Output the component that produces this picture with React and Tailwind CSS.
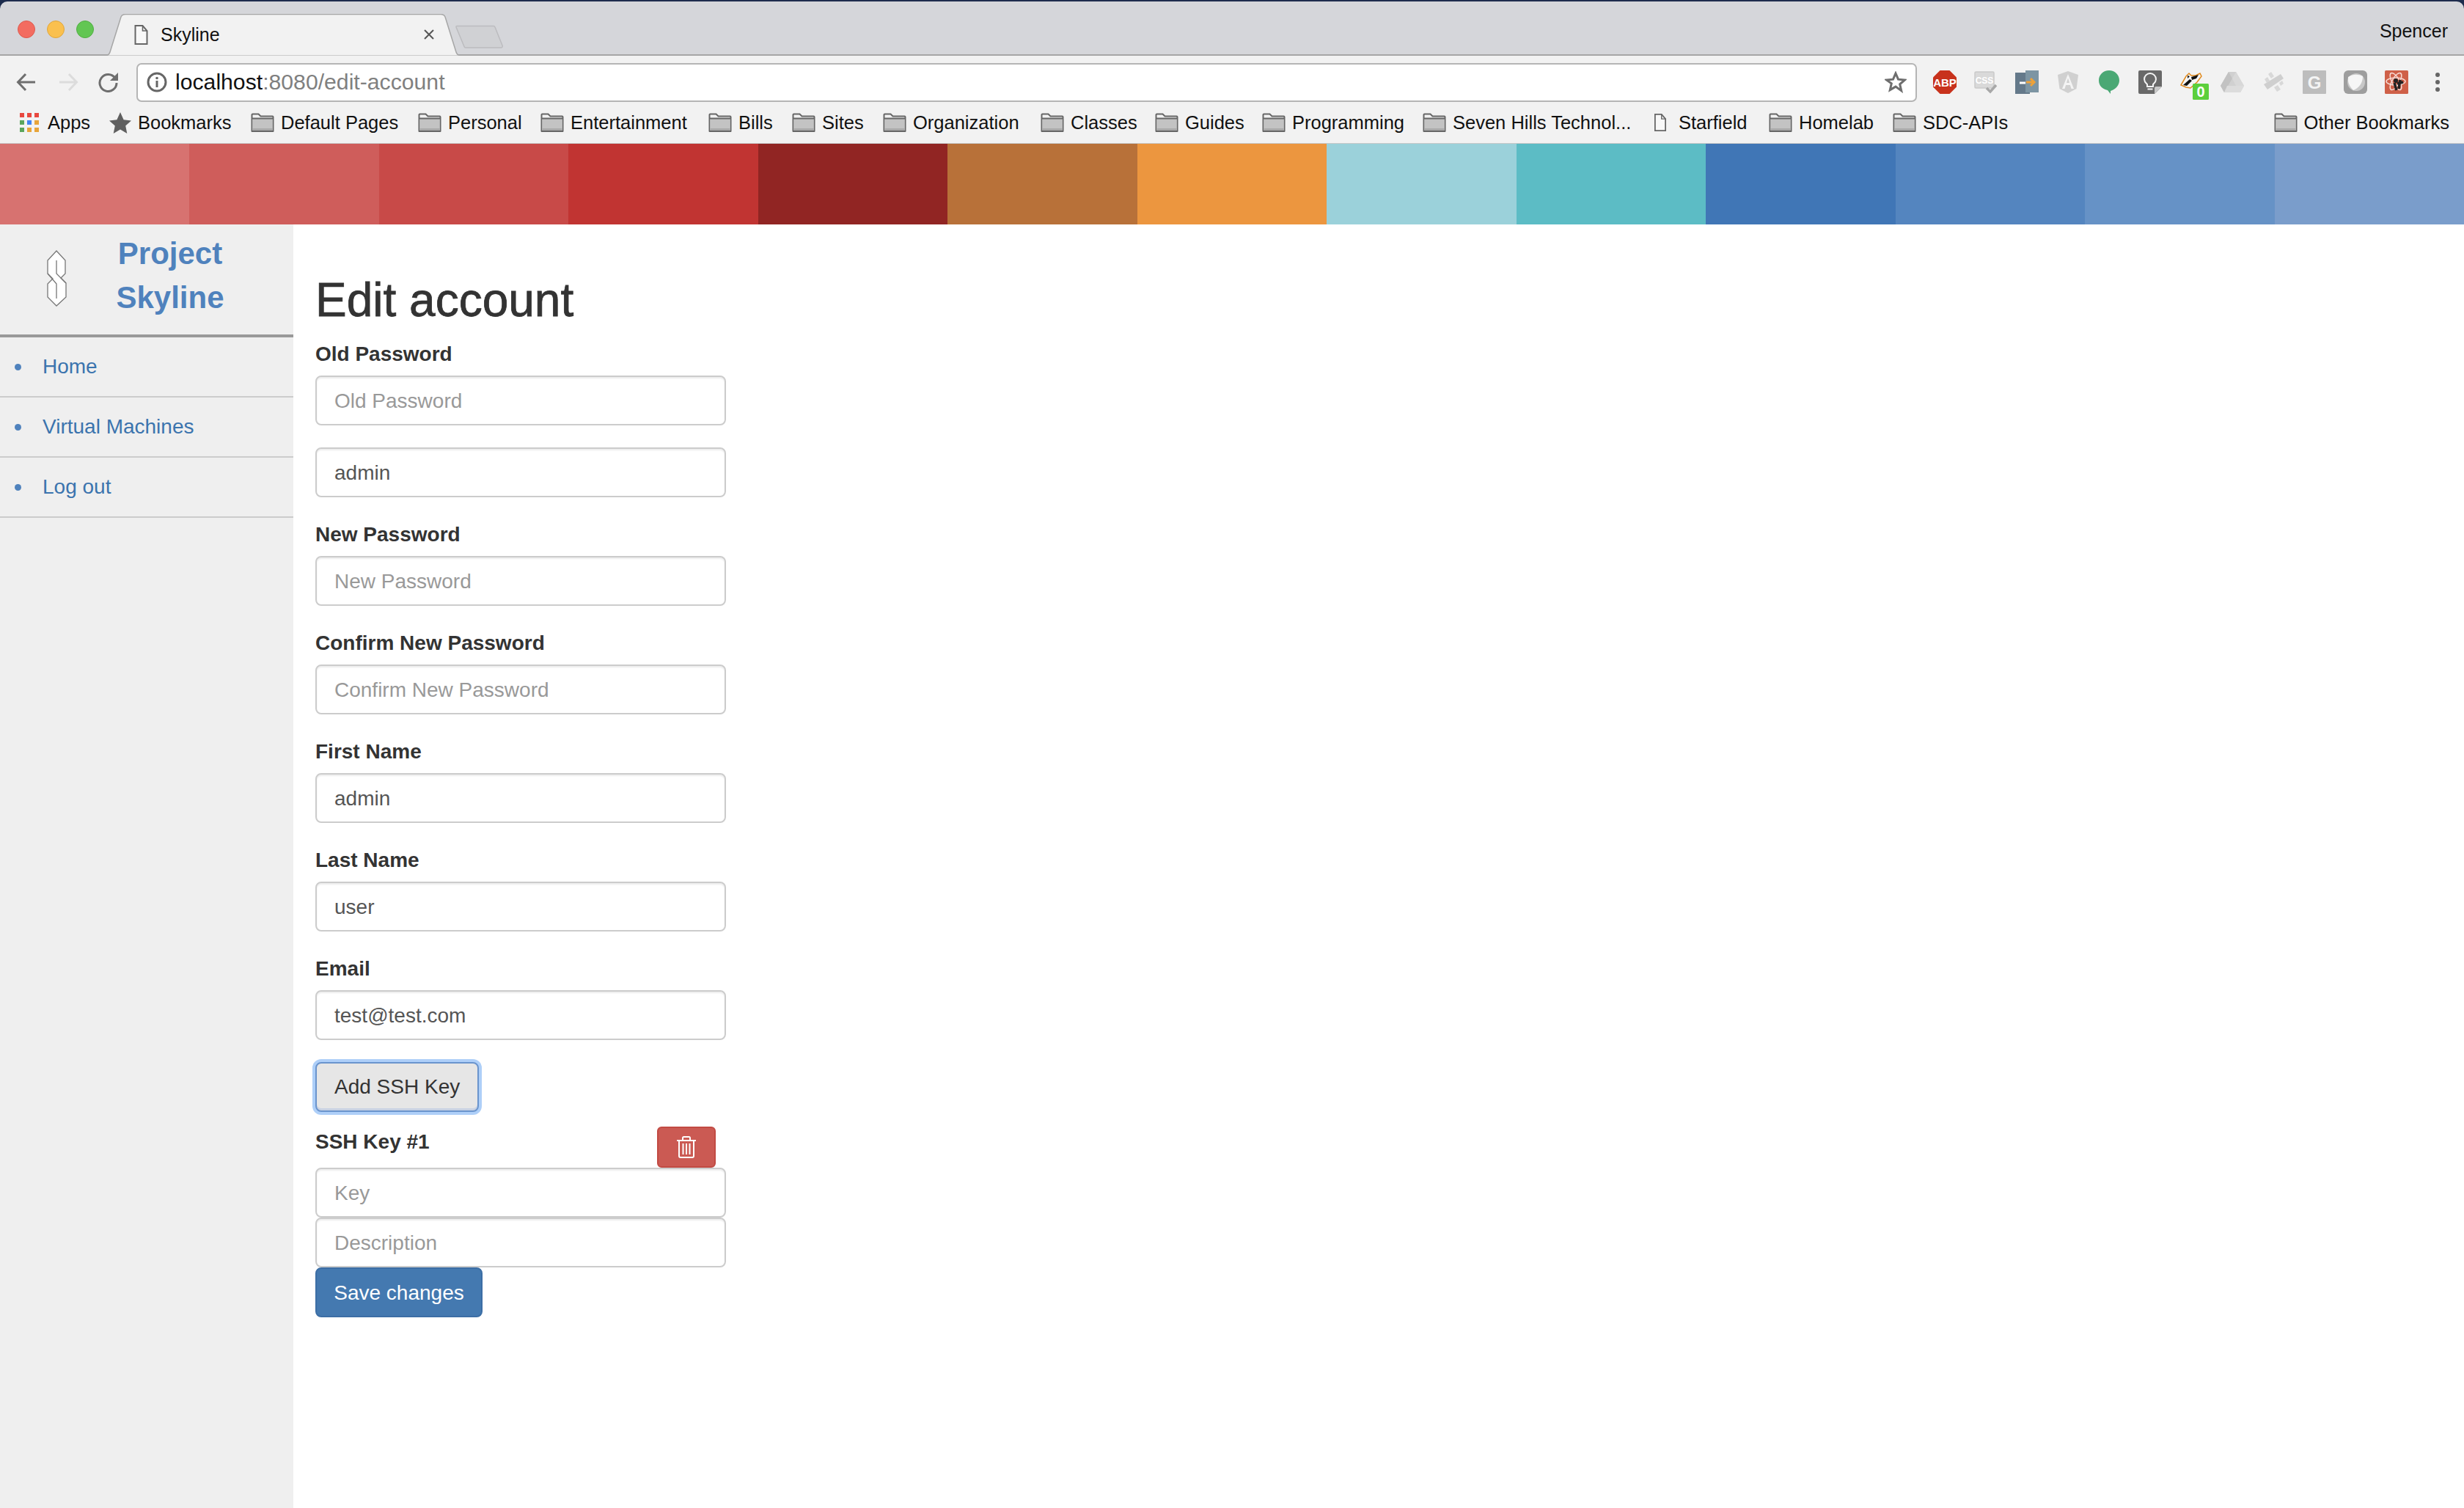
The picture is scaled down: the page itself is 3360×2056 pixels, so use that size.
import React from "react";

const strip = [
  "bg-[#d77270]", "bg-[#cf5d5b]", "bg-[#c84a48]", "bg-[#c13432]", "bg-[#912523]", "bg-[#b87139]", "bg-[#ec963f]",
  "bg-[#9bd1da]", "bg-[#5cbcc5]", "bg-[#4076b6]", "bg-[#5485bf]", "bg-[#6692c6]", "bg-[#7a9dcb]",
];

const Folder = () => (
  <svg width="32" height="26" viewBox="0 0 32 26" className="shrink-0">
    <path d="M1.500 24.500V2.500a1 1 0 0 1 1-1h8l3 3h16a1 1 0 0 1 1 1v19z" fill="#f2f2f2" stroke="#666" strokeWidth="2" />
    <rect x="2.500" y="8" width="27" height="16" fill="#c3c3c3" />
    <rect x="1.500" y="6.500" width="29" height="2" fill="#666" />
    <rect x="2.500" y="21" width="27" height="3" fill="#aaa" />
    <path d="M1 25h30" stroke="#666" strokeWidth="2" />
  </svg>
);

const PageIcon = ({ w = 18, h = 27 }) => (
  <svg width={w} height={h} viewBox="0 0 18 27" className="shrink-0">
    <path d="M1 1h10l6 7v18H1z" fill="#f8f8f8" stroke="#666" strokeWidth="2" />
    <path d="M11 1v7h6" fill="none" stroke="#666" strokeWidth="1.600" />
  </svg>
);

const Bm = ({ label, w }) => (
  <div className={"flex items-center gap-[9px] shrink-0 " + w}>
    <Folder />
    <span>{label}</span>
  </div>
);

const Ext = ({ children }) => (
  <svg width="32" height="32" viewBox="0 0 32 32" className="shrink-0 overflow-visible">
    {children}
  </svg>
);

const Field = ({ label, placeholder, value }) => (
  <div className="mb-[30px]">
    {label && <label className="block font-bold text-[28px] leading-[42px] mb-[8px] text-[#333]">{label}</label>}
    <TextInput placeholder={placeholder} value={value} />
  </div>
);

const TextInput = ({ placeholder, value }) => (
  <input
    type="text"
    placeholder={placeholder}
    defaultValue={value}
    className="block w-[560px] h-[68px] px-[24px] pt-[2px] text-[28px] text-[#555] bg-white border-2 border-[#ccc] rounded-[8px] shadow-[inset_0_2px_2px_rgba(0,0,0,0.075)] placeholder:text-[#999] outline-none"
  />
);

const NavItem = ({ label }) => (
  <div className="flex items-center h-[82px] border-b-2 border-[#ccc] text-[#3b74ae] text-[28px] pl-[20px]">
    <span className="w-[9px] h-[9px] rounded-full bg-[#4f82bd] mr-[30px]" />
    <span className="-ml-[1px]">{label}</span>
  </div>
);

export default function App() {
  return (
    <div className="w-[3360px] h-[2056px] flex flex-col bg-white overflow-hidden font-['Liberation_Sans',sans-serif]">
      {/* tab strip */}
      <div className="h-[76px] bg-[#1d2c4d] pt-[2px] shrink-0">
        <div className="h-[74px] rounded-t-[10px] bg-[#d5d6da] border-b-2 border-[#a6a6a6] flex items-end pl-[24px]">
          <div className="flex gap-[16px] self-start mt-[26px]">
            <span className="w-[24px] h-[24px] rounded-full bg-[#f36c60] border border-[#dd5a4e]" />
            <span className="w-[24px] h-[24px] rounded-full bg-[#fac04e] border border-[#dfa63c]" />
            <span className="w-[24px] h-[24px] rounded-full bg-[#62c653] border border-[#50ae42]" />
          </div>
          <div className="relative w-[484px] h-[57px] -mb-[2px] ml-[16px] flex items-center pl-[39px] shrink-0">
            <svg width="484" height="57" viewBox="0 0 484 57" className="absolute left-0 top-0">
              <path d="M0 56.500C3 56.500 5 55 6 52L21 4C22 1.500 24 .5 27 .5H457C460 .5 462 1.500 463 4L478 52C479 55 481 56.500 484 56.500" fill="#f2f2f2" stroke="#a6a6a6" strokeWidth="1.500" />
            </svg>
            <div className="relative flex items-center w-full text-[25px] text-[#111]">
              <PageIcon w={19} h={27} />
              <span className="ml-[17px]">Skyline</span>
              <svg width="16" height="16" viewBox="0 0 16 16" className="absolute left-[394px] top-[10px]">
                <path d="M2 2l12 12M14 2L2 14" stroke="#555" strokeWidth="2" />
              </svg>
            </div>
          </div>
          <svg width="66" height="32" viewBox="0 0 66 32" className="self-start mt-[32px] -ml-[7px] shrink-0">
            <path d="M2 1.500H52a2 2 0 0 1 2 1.500L64 28a2 2 0 0 1-2 3H14a2 2 0 0 1-2-1.500L1 3a1.200 1.200 0 0 1 1-1.500z" fill="#d0d1d4" stroke="#bcbcbf" strokeWidth="1.500" />
          </svg>
          <span className="ml-auto self-start mt-[25px] pr-[22px] text-[25px] leading-[30px] text-[#111]">Spencer</span>
        </div>
      </div>

      {/* toolbar */}
      <div className="h-[69px] bg-[#f2f2f2] flex items-center pt-[3px] pl-[22px] pr-[20px] shrink-0">
        <svg width="28" height="26" viewBox="0 0 28 26" className="shrink-0">
          <path d="M26 13H3M13 2L2.500 13 13 24" fill="none" stroke="#6e6e6e" strokeWidth="3" />
        </svg>
        <svg width="28" height="26" viewBox="0 0 28 26" className="shrink-0 ml-[29px]">
          <path d="M2 13h23M15 2l10.500 11L15 24" fill="none" stroke="#dcdcdc" strokeWidth="3" />
        </svg>
        <svg width="28" height="28" viewBox="0 0 28 28" className="shrink-0 ml-[27px]">
          <path d="M23 8.500A11.500 11.500 0 1 0 25 15" fill="none" stroke="#6e6e6e" strokeWidth="3" />
          <path d="M27 1v11H16z" fill="#6e6e6e" />
        </svg>
        <div className="ml-[24px] flex-1 h-[53px] bg-white border-2 border-[#b5b5b5] rounded-[7px] flex items-center pl-[12px] pr-[12px] mr-[22px]">
          <svg width="28" height="28" viewBox="0 0 28 28" className="shrink-0">
            <circle cx="14" cy="14" r="12" fill="none" stroke="#666" strokeWidth="3" />
            <circle cx="14" cy="8.500" r="1.800" fill="#666" />
            <path d="M14 12v9" stroke="#666" strokeWidth="3" />
          </svg>
          <span className="ml-[11px] text-[30.200px] text-[#111]">
            localhost<span className="text-[#808080]">:8080/edit-account</span>
          </span>
          <svg width="30" height="30" viewBox="0 0 30 30" className="shrink-0 ml-auto">
            <path d="M15 3l3.500 8.200 8.900.8-6.700 5.900 2 8.700L15 21.100 7.300 25.600l2-8.700L2.600 12l8.900-.8z" fill="none" stroke="#6e6e6e" strokeWidth="3" />
          </svg>
        </div>
        <div className="flex gap-[24px]">
          <Ext>
            <path d="M9.500 0h13L32 9.500v13L22.500 32h-13L0 22.500v-13z" fill="#c8321c" />
            <text x="16" y="21.500" textAnchor="middle" fontSize="15" fontWeight="700" fill="#fff" fontFamily="Liberation Sans, sans-serif">ABP</text>
          </Ext>
          <Ext>
            <rect x="1" y="2" width="26" height="22" rx="1.500" fill="#d9d9d9" stroke="#cacaca" strokeWidth="1.500" />
            <text x="14" y="18" textAnchor="middle" fontSize="12" fontWeight="700" fill="#fff" fontFamily="Liberation Sans, sans-serif">CSS</text>
            <path d="M17 24l5 5 8-9" fill="none" stroke="#a8a8a8" strokeWidth="3.500" />
          </Ext>
          <Ext>
            <rect x="0" y="3" width="20" height="29" fill="#64798a" />
            <rect x="14" y="0" width="18" height="30" fill="#7d95a3" />
            <path d="M6 17h8" stroke="#fff" strokeWidth="3" />
            <path d="M15 16h10M21 11l5 5-5 5" fill="none" stroke="#eda23a" strokeWidth="3" />
          </Ext>
          <Ext>
            <path d="M16 1L30 6l-2.500 19L16 31 4.500 25 2 6z" fill="#d0d0d0" />
            <path d="M16 5l-8 20h3.500l1.600-5h5.800l1.600 5H24zM14 17l2-6.500 2 6.500z" fill="#f4f4f4" />
          </Ext>
          <Ext>
            <path d="M16 0c8 0 14 6 14 13.500 0 7-5 12-12 14.500V32l-4-5C7 25.500 2 21 2 13.500 2 6 8 0 16 0z" fill="#4aa874" />
          </Ext>
          <Ext>
            <path d="M2 0h28a2 2 0 0 1 2 2v20l-10 10H2a2 2 0 0 1-2-2V2a2 2 0 0 1 2-2z" fill="#696969" />
            <path d="M22 32l10-10H24a2 2 0 0 0-2 2z" fill="#c8c8c8" />
            <path d="M12 22v-3c-2-2-4-3.500-4-7a8 8 0 0 1 16 0c0 3.500-2 5-4 7v3z" fill="none" stroke="#f4f4f4" strokeWidth="2" />
            <path d="M12.500 25.500h7" stroke="#f4f4f4" strokeWidth="2" />
          </Ext>
          <Ext>
            <path d="M2 20L9 8l4-4 3 3h6l6-3 2 4-6 8-9 8-6-1z" fill="#f5f5f5" stroke="#e08a1e" strokeWidth="1.500" />
            <path d="M5 20l9-8 3 2-7 7zM16 9l10-3-3 5-6 2zM11 7l3 1-3 3z" fill="#111" />
            <rect x="18" y="18" width="22" height="22" rx="1.500" fill="#5bcf3c" />
            <text x="29" y="36" textAnchor="middle" fontSize="20" fontWeight="700" fill="#fff" fontFamily="Liberation Sans, sans-serif">0</text>
          </Ext>
          <Ext>
            <path d="M11 2h10l11 19-5 9H5L0 21z" fill="#d0d0d0" />
            <path d="M11 2l5 9L5 30 0 21z" fill="#c2c2c2" />
            <path d="M21 2l11 19H21l-5-10z" fill="#d8d8d8" />
            <path d="M9 21h23l-5 9H5z" fill="#dcdcdc" />
          </Ext>
          <Ext>
            <path d="M3 19L26 5l4 6L8 26z" fill="#cfcfcf" />
            <path d="M9 5l4-3 4 6-4 3zM4 12l4-3 3 5-4 3zM17 23l5-3 4 6-5 3zM24 17l4-3 2 4-4 3z" fill="#d8d8d8" />
          </Ext>
          <Ext>
            <rect width="32" height="32" rx="1" fill="#bdbdbd" />
            <text x="16" y="25" textAnchor="middle" fontSize="24" fontWeight="700" fill="#f4f4f4" fontFamily="Liberation Sans, sans-serif">G</text>
          </Ext>
          <Ext>
            <rect width="32" height="32" rx="6" fill="#9e9e9e" />
            <circle cx="17" cy="16" r="12" fill="#c8c8c8" />
            <path d="M6 9c6-4 14-4 20-1 0 9-5 16-13 19C8 22 5 16 6 9z" fill="#f6f6f6" />
          </Ext>
          <Ext>
            <rect width="32" height="32" rx="1.500" fill="#cf6048" />
            <ellipse cx="15" cy="15" rx="13" ry="5" fill="none" stroke="#f7d9d2" strokeWidth="1.500" />
            <ellipse cx="15" cy="15" rx="13" ry="5" fill="none" stroke="#f7d9d2" strokeWidth="1.500" transform="rotate(60 15 15)" />
            <ellipse cx="15" cy="15" rx="13" ry="5" fill="none" stroke="#f7d9d2" strokeWidth="1.500" transform="rotate(120 15 15)" />
            <circle cx="15" cy="14" r="3" fill="#222" />
            <path d="M13 17l3 10M21 13l-2 12M17 18l8-2" stroke="#222" strokeWidth="3.500" />
          </Ext>
          <Ext>
            <circle cx="16" cy="6" r="3" fill="#666" />
            <circle cx="16" cy="16" r="3" fill="#666" />
            <circle cx="16" cy="26" r="3" fill="#666" />
          </Ext>
        </div>
      </div>

      {/* bookmarks */}
      <div className="h-[51px] bg-[#f2f2f2] border-b border-[#c9c9c9] flex items-center pb-[6px] pl-[27px] pr-[20px] text-[25.500px] text-[#111] whitespace-nowrap shrink-0">
        <svg width="26" height="26" viewBox="0 0 26 26" className="shrink-0">
          <rect x="0" y="0" width="6" height="6" fill="#e8483f" />
          <rect x="10" y="0" width="6" height="6" fill="#e8483f" />
          <rect x="20" y="0" width="6" height="6" fill="#e8483f" />
          <rect x="0" y="10" width="6" height="6" fill="#5ba55c" />
          <rect x="10" y="10" width="6" height="6" fill="#4285f4" />
          <rect x="20" y="10" width="6" height="6" fill="#e8a53a" />
          <rect x="0" y="20" width="6" height="6" fill="#5ba55c" />
          <rect x="10" y="20" width="6" height="6" fill="#e8a53a" />
          <rect x="20" y="20" width="6" height="6" fill="#e8a53a" />
        </svg>
        <span className="ml-[12px] w-[84px] shrink-0">Apps</span>
        <svg width="30" height="29" viewBox="0 0 30 29" className="shrink-0">
          <path d="M15 0l4.600 10.300L30 11.400l-7.800 7.200L24.300 29 15 23.600 5.700 29l2.100-10.400L0 11.400l10.400-1.100z" fill="#5f5f5f" />
        </svg>
        <span className="ml-[9px] w-[154px] shrink-0">Bookmarks</span>
        <Bm label="Default Pages" w="w-[228px]" />
        <Bm label="Personal" w="w-[167px]" />
        <Bm label="Entertainment" w="w-[229px]" />
        <Bm label="Bills" w="w-[114px]" />
        <Bm label="Sites" w="w-[124px]" />
        <Bm label="Organization" w="w-[215px]" />
        <Bm label="Classes" w="w-[156px]" />
        <Bm label="Guides" w="w-[146px]" />
        <Bm label="Programming" w="w-[219px]" />
        <Bm label="Seven Hills Technol..." w="w-[316px]" />
        <div className="flex items-center gap-[17px] w-[156px] shrink-0">
          <PageIcon w={16} h={26} />
          <span>Starfield</span>
        </div>
        <Bm label="Homelab" w="w-[169px]" />
        <Bm label="SDC-APIs" w="w-[160px]" />
        <div className="flex items-center gap-[9px] ml-auto">
          <Folder />
          <span>Other Bookmarks</span>
        </div>
      </div>

      {/* colour strip */}
      <div className="h-[110px] grid grid-cols-13 shrink-0">
        {strip.map((c) => (
          <div key={c} className={c} />
        ))}
      </div>

      {/* page */}
      <div className="flex flex-1 min-h-0">
        <aside className="w-[400px] bg-[#efefef] shrink-0">
          <div className="h-[154px] border-b-4 border-[#999] flex items-start">
            <svg width="80" height="90" viewBox="0 0 80 90" className="ml-[40px] mt-[29px] shrink-0">
              <path d="M37 7L49 20V38L43 44L50 51V70L37 82L25 70V52L32 45L25 38V20Z" fill="#fff" stroke="#777" strokeWidth="1.300" />
              <path d="M37 20V38L50 51M25 38L37 52V72" fill="none" stroke="#777" strokeWidth="1.300" />
            </svg>
            <div className="ml-[22px] w-[180px] pt-[10px] text-center font-bold text-[42px] leading-[60px] text-[#4f82bd]">
              <div>Project</div>
              <div>Skyline</div>
            </div>
          </div>
          <NavItem label="Home" />
          <NavItem label="Virtual Machines" />
          <NavItem label="Log out" />
        </aside>

        <main className="flex-1 pl-[30px]">
          <h1 className="mt-[70px] mb-[20px] text-[64px] leading-[66px] text-[#333] [-webkit-text-stroke:0.8px_#333]">Edit account</h1>
          <Field label="Old Password" placeholder="Old Password" />
          <Field placeholder="" value="admin" />
          <Field label="New Password" placeholder="New Password" />
          <Field label="Confirm New Password" placeholder="Confirm New Password" />
          <Field label="First Name" value="admin" />
          <Field label="Last Name" value="user" />
          <Field label="Email" value="test@test.com" />
          <button className="block h-[68px] px-[24px] text-[28px] text-[#333] bg-[#e6e6e6] border-2 border-[#6a94cd] rounded-[8px] shadow-[0_0_0_4px_#aecff8,inset_0_-3px_0_#c9d2e3]">
            Add SSH Key
          </button>
          <div className="w-[560px] flex justify-between items-start mt-[20px] h-[56px]">
            <label className="font-bold text-[28px] leading-[42px] text-[#333]">SSH Key #1</label>
            <button className="w-[80px] h-[56px] mr-[14px] flex items-center justify-center bg-[#cb5a53] border-2 border-[#c24a43] rounded-[6px]">
              <svg width="26" height="30" viewBox="0 0 26 30">
                <path d="M0 6h26M8 5V2.500A1.500 1.500 0 0 1 9.500 1h7A1.500 1.500 0 0 1 18 2.500V5M3 6v21a2 2 0 0 0 2 2h16a2 2 0 0 0 2-2V6M8.500 10v15M13 10v15M17.500 10v15" fill="none" stroke="#fff" strokeWidth="2" />
              </svg>
            </button>
          </div>
          <TextInput placeholder="Key" />
          <TextInput placeholder="Description" />
          <button className="block h-[68px] w-[228px] pt-[1px] text-center text-[28px] text-white bg-[#4479b0] border-2 border-[#3c6ea5] rounded-[8px]">
            Save changes
          </button>
        </main>
      </div>
    </div>
  );
}
